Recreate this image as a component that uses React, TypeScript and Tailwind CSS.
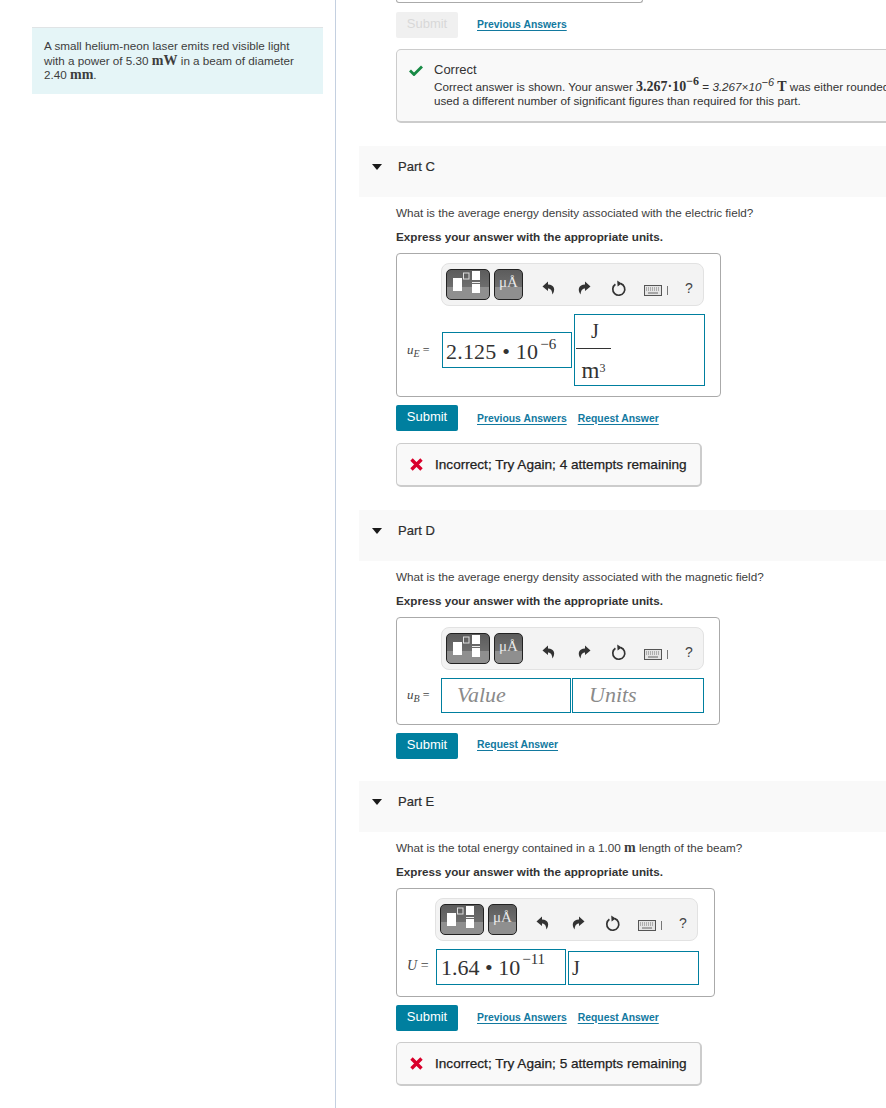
import React from "react";

const sans = { fontFamily: '"Liberation Sans", Arial, sans-serif' };

function Part({ label, className = "" }: { label: string; className?: string }) {
  return (
    <div className={`ml-[23px] h-[51px] bg-[#f9f9f9] flex items-start pt-[12px] ${className}`}>
      <svg width="10" height="6" viewBox="0 0 10 6" className="ml-[13px] mt-[6px] shrink-0">
        <path d="M0 0H10L5 6Z" fill="#1a1a1a" />
      </svg>
      <span className="ml-[16px] mt-[1px] text-[13px] leading-[16px] text-[#2d2d2d] [-webkit-text-stroke:0.2px_#2d2d2d]">{label}</span>
    </div>
  );
}

function Links({ prev, req, className }: { prev?: boolean; req?: boolean; className: string }) {
  return (
    <div className={`flex gap-[11px] ml-[19px] text-[10.4px] font-bold leading-[14px] text-[#12799f] ${className}`}>
      {prev && <span className="underline underline-offset-2">Previous Answers</span>}
      {req && <span className="underline underline-offset-2">Request Answer</span>}
    </div>
  );
}

function Submit({ disabled }: { disabled?: boolean }) {
  return (
    <div className={`w-[62px] h-[26px] rounded-[2px] flex items-center justify-center text-[13px] leading-[14px] pb-[2px] ${disabled ? "bg-[#f0f0f0] text-[#d8d8d8]" : "bg-[#007f9f] text-white"}`}>
      Submit
    </div>
  );
}

function Toolbar({ className }: { className: string }) {
  return (
    <div className={`h-[43px] w-[263px] rounded-[8px] border border-[#e2e2e2] bg-[#f3f3f3] flex items-center text-[#333] ${className}`}>
      <div className="ml-[4px] w-[44px] h-[31px] rounded-[5px] border border-[#222] bg-[linear-gradient(#5c5c5c,#6e6e6e_60%,#8f8f8f_60%,#8f8f8f)] overflow-hidden shrink-0">
        <svg width="42" height="29" viewBox="0 0 42 29">
          <rect x="6" y="8" width="9" height="13" fill="#fff" />
          <rect x="16.5" y="3" width="5.5" height="6" fill="none" stroke="#ddd" strokeWidth="1" />
          <rect x="25" y="1" width="8" height="9" fill="#fff" />
          <rect x="25" y="12" width="8" height="1" fill="#eee" />
          <rect x="25" y="14" width="8" height="9" fill="#fff" />
        </svg>
      </div>
      <div className="ml-[4px] w-[29px] h-[31px] rounded-[5px] border border-[#222] bg-[linear-gradient(#5c5c5c,#6e6e6e_60%,#8f8f8f_60%,#8f8f8f)] overflow-hidden shrink-0 flex items-start justify-center pt-[2px] text-[15px] leading-[20px] text-[#e8e8e8] font-['Liberation_Serif',serif]">
        μÅ
      </div>
      <svg width="14" height="14" viewBox="0 0 14 14" className="ml-[19px] mt-[7px] shrink-0">
        <path d="M6 0.5L0.5 5.5L6 10V7.4C8.8 7.4 10.2 9.6 10.4 13.5C13.8 8.5 12.4 3.4 6 3.4Z" fill="#333" />
      </svg>
      <svg width="14" height="14" viewBox="0 0 14 14" className="ml-[21px] mt-[7px] shrink-0">
        <path d="M8 0.5L13.5 5.5L8 10V7.4C5.2 7.4 3.8 9.6 3.6 13.5C0.2 8.5 1.6 3.4 8 3.4Z" fill="#333" />
      </svg>
      <svg width="16" height="17" viewBox="0 0 16 17" className="ml-[20px] mt-[7px] shrink-0">
        <path d="M9.8 3.6A6 6 0 1 1 4.4 4.3" fill="none" stroke="#333" strokeWidth="1.7" />
        <path d="M6.2 0.5L10.8 3.4L6.6 6.5Z" fill="#333" />
      </svg>
      <svg width="18" height="11" viewBox="0 0 18 11" className="ml-[17px] mt-[11px] shrink-0">
        <rect x="0.5" y="0.5" width="17" height="10" fill="#e4e4e4" stroke="#555" />
        <path d="M2 3H16M2 5H16" stroke="#777" strokeDasharray="1 1" />
        <path d="M4 8H14" stroke="#666" />
      </svg>
      <span className="ml-[5px] mt-[11px] w-px h-[9px] bg-[#777] shrink-0" />
      <span className="ml-[17px] mt-[7px] text-[14px] leading-[16px] text-[#444]">?</span>
    </div>
  );
}

const serif = "font-['Liberation_Serif',serif]";

function Answer({ className, children }: { className: string; children: React.ReactNode }) {
  return <div className={`ml-[60px] rounded-[4px] border border-[#aaa] ${className}`}>{children}</div>;
}

function Feedback({ text }: { text: string }) {
  return (
    <div className="ml-[60px] w-[306px] h-[44px] rounded-[5px] border border-[#ccc] border-r-2 border-b-2 bg-[#f9f9f9] flex items-center">
      <svg width="13" height="13" viewBox="0 0 13 13" className="ml-[13px] shrink-0">
        <path d="M1.5 1.5L11.5 11.5M11.5 1.5L1.5 11.5" stroke="#d9002b" strokeWidth="3.4" />
      </svg>
      <span className="ml-[12px] text-[13.6px] leading-[16px] text-[#222] whitespace-nowrap [-webkit-text-stroke:0.25px_#222]">{text}</span>
    </div>
  );
}

function Question({ children }: { children: React.ReactNode }) {
  return (
    <>
      <p className="ml-[60px] mt-[8px] text-[11.7px] leading-[16px] text-[#3d3d3d]">{children}</p>
      <p className="ml-[60px] mt-[8px] text-[11.7px] leading-[16px] font-bold text-[#333]">Express your answer with the appropriate units.</p>
    </>
  );
}

const boxCls = "border border-[#007f9f] bg-white shrink-0";

export default function App() {
  return (
    <div style={sans} className="w-[886px] h-[1108px] overflow-hidden bg-white flex">
      <div className="w-[336px] h-full border-r border-[#c4d0e0] shrink-0 pt-[27px] pl-[32px]">
        <div className="w-[291px] h-[67px] bg-[#e5f5f7] border-t border-[#e0e4e6] pl-[12px] pr-[20px] pt-[11px] text-[11.7px] leading-[14.5px] text-[#3d3d3d]">
          A small helium-neon laser emits red visible light with a power of 5.30{" "}
          <span className={`${serif} font-bold text-[14px] leading-[14px]`}>mW</span> in a beam of diameter 2.40{" "}
          <span className={`${serif} font-bold text-[14px] leading-[14px]`}>mm</span>.
        </div>
      </div>

      <div className="w-[550px] shrink-0 overflow-hidden">
        <div className="ml-[60px] w-[247px] h-[3px] border border-t-0 border-[#aaa] rounded-b-[4px]" />
        <div className="ml-[60px] mt-[9px] flex items-center">
          <Submit disabled />
          <Links prev className="-mt-[1px]" />
        </div>
        <div className="ml-[60px] mt-[11px] w-[520px] h-[74px] rounded-[5px] border border-[#ccc] border-b-2 bg-[#f9f9f9] flex">
          <svg width="14" height="11" viewBox="0 0 14 11" className="ml-[12px] mt-[15px] shrink-0">
            <path d="M1 5.5L5 9.5L13 1.5" fill="none" stroke="#178a45" strokeWidth="2.8" />
          </svg>
          <div className="ml-[11px] pt-[12px] text-[#333] whitespace-nowrap">
            <div className="text-[13px] leading-[15px]">Correct</div>
            <div className="mt-[3px] text-[11.7px] leading-[14px]">
              Correct answer is shown. Your answer <span className={`${serif} font-bold text-[14px] leading-[14px]`}>3.267·10<sup className="text-[12px]">−6</sup></span>
              {" "}= <i>3.267×10<sup className="text-[11px]">−6</sup></i> <span className={`${serif} font-bold text-[14px] leading-[14px]`}>T</span> was either rounded or
            </div>
            <div className="text-[11.7px] leading-[14px]">used a different number of significant figures than required for this part.</div>
          </div>
        </div>

        <Part label="Part C" className="mt-[23px]" />
        <Question>What is the average energy density associated with the electric field?</Question>
        <Answer className="mt-[8px] w-[325px] h-[144px] pt-[9px]">
          <Toolbar className="ml-[44px]" />
          <div className="mt-[8px] h-[72px] flex items-center">
            <span className={`${serif} ml-[10px] w-[35px] text-[13px] italic text-[#444] whitespace-nowrap`}>u<sub className="text-[10px]">E</sub> <span className="not-italic text-[12px]">=</span></span>
            <div className={`${boxCls} w-[130px] h-[36px] flex items-center pl-[3px] pt-[2px] ${serif} text-[22px] tracking-[0.2px] text-[#333] whitespace-nowrap`}>
              2.125 • 10<span className="text-[15px] -translate-y-[7px] ml-[2px]">−6</span>
            </div>
            <div className={`${boxCls} ml-[2px] w-[131px] h-[72px] pl-[1px] ${serif} text-[#333]`}>
              <div className="w-[35px] text-center">
                <div className="h-[34px] pt-[2px] pl-[3px] text-[20px] leading-[28px] border-b border-[#333]">J</div>
                <div className="text-[23px] leading-[28px] pt-[8px]">m<sup className="text-[12px]">3</sup></div>
              </div>
            </div>
          </div>
        </Answer>
        <div className="ml-[60px] mt-[8px] flex items-center">
          <Submit />
          <Links prev req className="mt-[1px]" />
        </div>
        <div className="mt-[12px]"><Feedback text="Incorrect; Try Again; 4 attempts remaining" /></div>

        <Part label="Part D" className="mt-[23px]" />
        <Question>What is the average energy density associated with the magnetic field?</Question>
        <Answer className="mt-[8px] w-[324px] h-[108px] pt-[9px]">
          <Toolbar className="ml-[44px]" />
          <div className="mt-[7px] h-[36px] flex items-center">
            <span className={`${serif} ml-[10px] w-[34px] text-[13px] italic text-[#444] whitespace-nowrap`}>u<sub className="text-[10px]">B</sub> <span className="not-italic text-[12px]">=</span></span>
            <div className={`${boxCls} w-[130px] h-[35px] flex items-center pl-[15px] pb-[2px] ${serif} text-[22px] italic text-[#8a8a8a]`}>Value</div>
            <div className={`${boxCls} ml-[1px] w-[132px] h-[35px] flex items-center pl-[16px] pb-[2px] ${serif} text-[22px] italic text-[#8a8a8a]`}>Units</div>
          </div>
        </Answer>
        <div className="ml-[60px] mt-[8px] flex items-center">
          <Submit />
          <Links req className="-mt-[3px]" />
        </div>

        <Part label="Part E" className="mt-[22px]" />
        <Question>What is the total energy contained in a 1.00 <span className={`${serif} font-bold text-[14px] leading-[14px]`}>m</span> length of the beam?</Question>
        <Answer className="mt-[8px] w-[319px] h-[109px] pt-[9px]">
          <Toolbar className="ml-[38px]" />
          <div className="mt-[7px] h-[37px] flex items-end">
            <span className={`${serif} ml-[10px] w-[29px] pb-[9px] text-[14px] italic text-[#444] whitespace-nowrap`}>U <span className="not-italic">=</span></span>
            <div className={`${boxCls} w-[130px] h-[36px] flex items-center pl-[4px] pt-[1px] ${serif} text-[22px] text-[#333] whitespace-nowrap`}>
              1.64 • 10<span className="text-[15px] -translate-y-[8px] ml-[2px]">−11</span>
            </div>
            <div className={`${boxCls} ml-[2px] w-[131px] h-[34px] flex items-center pl-[3px] ${serif} text-[20px] text-[#333]`}>J</div>
          </div>
        </Answer>
        <div className="ml-[60px] mt-[8px] flex items-center">
          <Submit />
          <Links prev req className="-mt-[1px]" />
        </div>
        <div className="mt-[11px]"><Feedback text="Incorrect; Try Again; 5 attempts remaining" /></div>
      </div>
    </div>
  );
}
